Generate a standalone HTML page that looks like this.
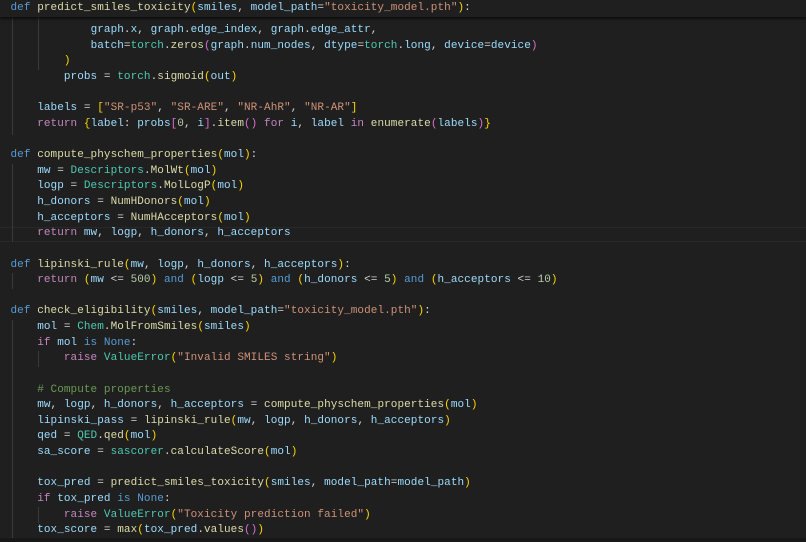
<!DOCTYPE html>
<html><head><meta charset="utf-8"><style>
html,body{margin:0;padding:0;background:#1f1f1f;width:806px;height:542px;overflow:hidden}
.c{position:absolute;left:10.5px;top:23.2px;font:11px/15.625px "Liberation Mono",monospace;letter-spacing:0.07px;color:#d4d4d4;white-space:pre}
.s{position:absolute;left:0;top:0;width:806px;height:17px;background:#1f1f1f;box-shadow:0 2px 3px rgba(0,0,0,.6);z-index:2;font:11px/15px "Liberation Mono",monospace;letter-spacing:0.07px;white-space:pre;color:#d4d4d4;padding-left:10.5px;padding-top:1px;box-sizing:border-box}
.hl{position:absolute;left:0;width:806px;height:15.6px;top:226.8px;border-top:1px solid #282828;border-bottom:1px solid #282828;box-sizing:border-box}
.g{position:absolute;width:1px;background:#3a3a3a}
.k{color:#569cd6}.f{color:#dcdcaa}.v{color:#9cdcfe}.t{color:#ce9178}.p{color:#c586c0}.n{color:#b5cea8}.cl{color:#4ec9b0}.cm{color:#6a9955}.b{color:#ffd700}.b2{color:#da70d6}.b3{color:#179fff}
.bot{position:absolute;left:0;top:538px;width:806px;height:4px;background:#181818}
</style></head><body>
<div class="s"><span class="k">def</span> <span class="f">predict_smiles_toxicity</span><span class="b">(</span><span class="v">smiles</span>, <span class="v">model_path</span>=<span class="t">"toxicity_model.pth"</span><span class="b">)</span>:</div>
<div class="hl"></div>
<div class="g" style="left:12px;top:17px;height:118px"></div>
<div class="g" style="left:38px;top:17px;height:53px"></div>
<div class="g" style="left:12px;top:164px;height:78px"></div>
<div class="g" style="left:12px;top:273px;height:16px"></div>
<div class="g" style="left:12px;top:320px;height:218px"></div>
<div class="g" style="left:38px;top:351px;height:16px"></div>
<div class="g" style="left:38px;top:507px;height:16px"></div>
<div class="c"><span>            <span class="v">graph</span>.<span class="v">x</span>, <span class="v">graph</span>.<span class="v">edge_index</span>, <span class="v">graph</span>.<span class="v">edge_attr</span>,</span>
            <span class="v">batch</span>=<span class="cl">torch</span>.<span class="f">zeros</span><span class="b2">(</span><span class="v">graph</span>.<span class="v">num_nodes</span>, <span class="v">dtype</span>=<span class="cl">torch</span>.<span class="v">long</span>, <span class="v">device</span>=<span class="v">device</span><span class="b2">)</span>
        <span class="b">)</span>
        <span class="v">probs</span> = <span class="cl">torch</span>.<span class="f">sigmoid</span><span class="b">(</span><span class="v">out</span><span class="b">)</span>

    <span class="v">labels</span> = <span class="b">[</span><span class="t">"SR-p53"</span>, <span class="t">"SR-ARE"</span>, <span class="t">"NR-AhR"</span>, <span class="t">"NR-AR"</span><span class="b">]</span>
    <span class="p">return</span> <span class="b">{</span><span class="v">label</span>: <span class="v">probs</span><span class="b2">[</span><span class="n">0</span>, <span class="v">i</span><span class="b2">]</span>.<span class="f">item</span><span class="b2">()</span> <span class="p">for</span> <span class="v">i</span>, <span class="v">label</span> <span class="p">in</span> <span class="f">enumerate</span><span class="b2">(</span><span class="v">labels</span><span class="b2">)</span><span class="b">}</span>

<span class="k">def</span> <span class="f">compute_physchem_properties</span><span class="b">(</span><span class="v">mol</span><span class="b">)</span>:
    <span class="v">mw</span> = <span class="cl">Descriptors</span>.<span class="f">MolWt</span><span class="b">(</span><span class="v">mol</span><span class="b">)</span>
    <span class="v">logp</span> = <span class="cl">Descriptors</span>.<span class="f">MolLogP</span><span class="b">(</span><span class="v">mol</span><span class="b">)</span>
    <span class="v">h_donors</span> = <span class="f">NumHDonors</span><span class="b">(</span><span class="v">mol</span><span class="b">)</span>
    <span class="v">h_acceptors</span> = <span class="f">NumHAcceptors</span><span class="b">(</span><span class="v">mol</span><span class="b">)</span>
    <span class="p">return</span> <span class="v">mw</span>, <span class="v">logp</span>, <span class="v">h_donors</span>, <span class="v">h_acceptors</span>

<span class="k">def</span> <span class="f">lipinski_rule</span><span class="b">(</span><span class="v">mw</span>, <span class="v">logp</span>, <span class="v">h_donors</span>, <span class="v">h_acceptors</span><span class="b">)</span>:
    <span class="p">return</span> <span class="b">(</span><span class="v">mw</span> &lt;= <span class="n">500</span><span class="b">)</span> <span class="k">and</span> <span class="b">(</span><span class="v">logp</span> &lt;= <span class="n">5</span><span class="b">)</span> <span class="k">and</span> <span class="b">(</span><span class="v">h_donors</span> &lt;= <span class="n">5</span><span class="b">)</span> <span class="k">and</span> <span class="b">(</span><span class="v">h_acceptors</span> &lt;= <span class="n">10</span><span class="b">)</span>

<span class="k">def</span> <span class="f">check_eligibility</span><span class="b">(</span><span class="v">smiles</span>, <span class="v">model_path</span>=<span class="t">"toxicity_model.pth"</span><span class="b">)</span>:
    <span class="v">mol</span> = <span class="cl">Chem</span>.<span class="f">MolFromSmiles</span><span class="b">(</span><span class="v">smiles</span><span class="b">)</span>
    <span class="p">if</span> <span class="v">mol</span> <span class="k">is</span> <span class="k">None</span>:
        <span class="p">raise</span> <span class="cl">ValueError</span><span class="b">(</span><span class="t">"Invalid SMILES string"</span><span class="b">)</span>

    <span class="cm"># Compute properties</span>
    <span class="v">mw</span>, <span class="v">logp</span>, <span class="v">h_donors</span>, <span class="v">h_acceptors</span> = <span class="f">compute_physchem_properties</span><span class="b">(</span><span class="v">mol</span><span class="b">)</span>
    <span class="v">lipinski_pass</span> = <span class="f">lipinski_rule</span><span class="b">(</span><span class="v">mw</span>, <span class="v">logp</span>, <span class="v">h_donors</span>, <span class="v">h_acceptors</span><span class="b">)</span>
    <span class="v">qed</span> = <span class="cl">QED</span>.<span class="f">qed</span><span class="b">(</span><span class="v">mol</span><span class="b">)</span>
    <span class="v">sa_score</span> = <span class="cl">sascorer</span>.<span class="f">calculateScore</span><span class="b">(</span><span class="v">mol</span><span class="b">)</span>

    <span class="v">tox_pred</span> = <span class="f">predict_smiles_toxicity</span><span class="b">(</span><span class="v">smiles</span>, <span class="v">model_path</span>=<span class="v">model_path</span><span class="b">)</span>
    <span class="p">if</span> <span class="v">tox_pred</span> <span class="k">is</span> <span class="k">None</span>:
        <span class="p">raise</span> <span class="cl">ValueError</span><span class="b">(</span><span class="t">"Toxicity prediction failed"</span><span class="b">)</span>
    <span class="v">tox_score</span> = <span class="f">max</span><span class="b">(</span><span class="v">tox_pred</span>.<span class="f">values</span><span class="b2">()</span><span class="b">)</span></div>
<div class="bot"></div>
</body></html>
